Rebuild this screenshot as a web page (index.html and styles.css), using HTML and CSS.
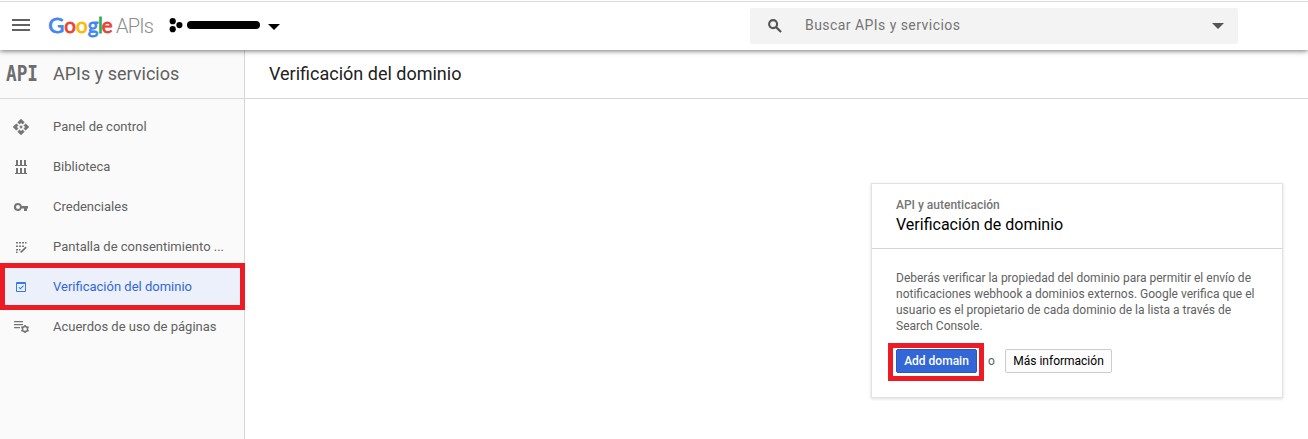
FILE: index.html
```html
<!DOCTYPE html>
<html lang="es">
<head>
<meta charset="utf-8">
<title>Verificación del dominio</title>
<link rel="stylesheet" href="styles.css">
</head>
<body>
<header class="topbar">
  <svg class="menu" width="18" height="12" viewBox="0 0 18 12"><path fill="#616161" d="M0 0h18v2H0zM0 5h18v2H0zM0 10h18v2H0z"/></svg>
  <svg class="logo" width="110" height="34" viewBox="0 0 110 34">
    <g class="wordmark">
      <text x="0.300" y="22.500" fill="#4285f4" stroke="#4285f4" textLength="16" lengthAdjust="spacingAndGlyphs">G</text>
      <text x="16.200" y="22.500" fill="#ea4335" stroke="#ea4335">o</text>
      <text x="28" y="22.500" fill="#fbbc05" stroke="#fbbc05">o</text>
      <text x="39.800" y="22.500" fill="#4285f4" stroke="#4285f4">g</text>
      <text x="50" y="22.500" fill="#34a853" stroke="#34a853">l</text>
      <text x="53.800" y="22.500" fill="#ea4335" stroke="#ea4335">e</text>
    </g>
    <text class="apis" x="68" y="22.500" textLength="38">APIs</text>
  </svg>
  <div class="project">
    <svg width="14" height="15" viewBox="0 0 14 15"><circle cx="3.7" cy="3.2" r="3.1"/><circle cx="3.7" cy="11.2" r="3.1"/><circle cx="10.4" cy="7.1" r="3.1"/></svg>
    <span class="redacted"></span>
    <svg class="caret" width="12" height="6" viewBox="0 0 12 6"><path d="M0 0h12L6 6z"/></svg>
  </div>
  <div class="search">
    <svg width="14" height="14" viewBox="0 0 14 14" fill="none" stroke="#555"><circle cx="5.1" cy="5.1" r="4" stroke-width="2.1"/><path d="M8 8l5 5" stroke-width="2.3"/></svg>
    <span>Buscar APIs y servicios</span>
    <svg class="search-caret" width="12" height="6" viewBox="0 0 12 6"><path fill="#555" d="M0 0h12L6 6z"/></svg>
  </div>
</header>
<div class="body">
  <aside class="sidebar">
    <div class="product">
      <svg width="36" height="34" viewBox="0 0 36 34"><text class="api-mark" x="1" y="25" textLength="32" lengthAdjust="spacingAndGlyphs">API</text></svg>
      <span>APIs y servicios</span>
    </div>
    <nav class="nav">
      <a class="item"><svg width="16" height="16" viewBox="1 1 22 22"><path d="M14 12l-2 2-2-2 2-2zM12 6l2.120 2.120 2.500-2.500L12 1 7.380 5.620l2.500 2.500zM6 12l2.120-2.120-2.500-2.500L1 12l4.620 4.620 2.500-2.500zM18 12l-2.120 2.120 2.500 2.500L23 12l-4.620-4.620-2.500 2.500zM12 18l-2.120-2.120-2.500 2.500L12 23l4.620-4.620-2.500-2.500z" stroke="#757575" stroke-width=".6"/></svg><span>Panel de control</span></a>
      <a class="item"><svg width="16" height="16" viewBox="0 0 16 16"><path d="M2 6h12v1H2zM2 14h12v1H2zM3 1h2v5H3zM7 1h2v5H7zM11 1h2v5h-2zM3 9h2v5H3zM7 9h2v5H7zM11 9h2v5h-2z"/></svg><span>Biblioteca</span></a>
      <a class="item"><svg width="16" height="16" viewBox="0 0 16 16"><path fill-rule="evenodd" d="M5 4a4 4 0 0 1 3.800 3H15v2.500h-1V12h-3V9.500H8.600A4 4 0 1 1 5 4zM5 6a2 2 0 1 0 0 4 2 2 0 0 0 0-4z"/></svg><span>Credenciales</span></a>
      <a class="item"><svg width="16" height="16" viewBox="0 0 16 16"><path d="M3 3h2v1.500H3zM6 3h2v1.500H6zM9 3h2v1.500H9zM12 3h1.500v1.500H12zM3 6.500h2V8H3zM6 6.500h2V8H6zM9 6.500h2V8H9zM3 10h2v1.500H3zM6 10h1.500v1.500H6zM3 12.500h1.500V14H3z"/><path d="M7.500 12.500l5-5 1.200 1.200-5 5H7.500z"/></svg><span>Pantalla de consentimiento ...</span></a>
      <a class="item active"><svg width="16" height="16" viewBox="0 0 16 16"><path fill-rule="evenodd" d="M4 3h8a1 1 0 0 1 1 1v8a1 1 0 0 1-1 1H4a1 1 0 0 1-1-1V4a1 1 0 0 1 1-1zM4 5v7h8V5z"/><path d="M5.800 8.200l1.600 1.600L10.500 6.600" fill="none" stroke="#3b78e7" stroke-width="1.100"/></svg><span>Verificación del dominio</span></a>
      <a class="item"><svg width="16" height="16" viewBox="0 0 16 16"><path d="M1 2h9v1.300H1zM1 5h9v1.300H1zM1 8h6v1.300H1z"/><circle cx="12" cy="10" r="2.600" fill="none" stroke="#757575" stroke-width="1.500"/><path d="M11.200 6h1.600v1.800h-1.600zM11.200 12.200h1.600V14h-1.600zM8 8.600l.8-1.300 1.400.8-.8 1.300zM13.800 11.900l.8-1.300 1.400.8-.8 1.300zM8 11.400l1.400-.8.8 1.300-1.400.8zM13.800 8.100l1.400-.8.8 1.300-1.400.8z"/></svg><span>Acuerdos de uso de páginas</span></a>
    </nav>
  </aside>
  <main class="main">
    <h1 class="title">Verificación del dominio</h1>
    <section class="card">
      <div class="card-head">
        <div class="eyebrow">API y autenticación</div>
        <h2 class="card-title">Verificación de dominio</h2>
      </div>
      <div class="card-body">
        <p class="text">Deberás verificar la propiedad del dominio para permitir el envío de<br>notificaciones webhook a dominios externos. Google verifica que el<br>usuario es el propietario de cada dominio de la lista a través de<br>Search Console.</p>
        <div class="actions">
          <div class="highlight"><button class="btn primary">Add domain</button></div>
          <span class="or">o</span>
          <button class="btn">Más información</button>
        </div>
      </div>
    </section>
  </main>
</div>
</body>
</html>
```
FILE: styles.css
```css
* { box-sizing: border-box; }
body { margin: 0; height: 439px; overflow: hidden; background: #fff; font-family: Roboto, sans-serif; display: flex; flex-direction: column; }
svg { display: block; flex: none; overflow: visible; }
.topbar { position: relative; z-index: 1; flex: none; height: 50px; padding-top: 1px; display: flex; align-items: center; background: linear-gradient(#fff 1px, #dadada 1px, #dadada 2px, #fff 2px); box-shadow: 0 1px 5px rgba(0,0,0,.55); }
.menu { margin-left: 12px; margin-top: -1px; }
.logo { margin-left: 18px; margin-top: 2px; }
.wordmark { font: 400 20.5px Lato, sans-serif; stroke-width: .8px; }
.apis { font: 300 20px Roboto, sans-serif; fill: #8c8c8c; }
.project { margin-left: 11px; width: 581px; display: flex; align-items: center; }
.redacted { width: 73px; height: 8px; margin-left: 4px; margin-top: -1px; border-radius: 4px; background: #000; }
.caret { margin-left: 8px; margin-top: 2px; }
.search { width: 488px; height: 36px; margin-top: 1px; padding: 0 14px 0 18px; border-radius: 2px; background: #f3f3f3; display: flex; align-items: center; font-size: 14px; letter-spacing: .45px; color: #757575; }
.search span { margin-left: 23px; margin-top: -2px; }
.search-caret { margin-left: auto; }
.body { flex: 1; display: flex; }
.sidebar { width: 245px; background: #fafafa; border-right: 1px solid #d5d5d5; }
.product { height: 49px; padding: 0 0 2px 5px; border-bottom: 1px solid #d9d9d9; display: flex; align-items: center; gap: 12px; font-size: 18px; color: #616161; }
.api-mark { font: bold 22px "DejaVu Sans Mono", monospace; fill: #6d6d6d; }
.nav { padding-top: 8px; }
.item { height: 40px; padding-left: 13px; display: flex; align-items: center; gap: 24px; font-size: 13px; color: #616161; white-space: nowrap; fill: #757575; }
.item span { margin-top: -2px; }
.active { position: relative; width: 245px; height: 47px; margin: -4px 0 -3px; padding-left: 8px; border: 5px solid #ed1c24; background: #ebf0fa; color: #3367d6; fill: #3b78e7; }
.active span { margin-top: -1px; }
.main { flex: 1; }
.title { margin: 0; height: 49px; padding-left: 24px; border-bottom: 1px solid #d9d9d9; font-size: 18px; font-weight: 400; line-height: 47px; color: #212121; }
.card { width: 412px; height: 215px; margin: 84px 0 0 626px; border: 1px solid #e2e2e2; box-shadow: 0 1px 3px rgba(0,0,0,.14); }
.card-head { height: 65px; padding: 13px 24px 0; border-bottom: 1px solid #d5d5d5; }
.eyebrow { font-size: 12px; font-weight: 500; line-height: 16px; color: #757575; }
.card-title { margin: 1px 0 0; font-size: 16px; font-weight: 400; line-height: 22px; color: #000; }
.card-body { padding: 21px 16px 0; }
.text { margin: 0 0 0 8px; font-size: 12px; line-height: 16px; color: #616161; white-space: nowrap; }
.actions { margin-top: 9px; display: flex; align-items: center; font-size: 12px; color: #616161; }
.highlight { width: 96px; height: 38px; padding: 1px 3px; border: 5px solid #ed1c24; }
.btn { display: block; width: 107px; height: 24px; margin-top: -2px; padding: 0; border: 1px solid #ccc; border-radius: 2px; background: #fcfcfc; color: #000; font: 400 12px Roboto, sans-serif; }
.primary { width: 81px; margin-top: 0; border-color: #2a56c6; background: #3367d6; color: #fff; font-weight: 500; }
.or { width: 21px; margin-top: -2px; padding-right: 6px; text-align: center; }
```
